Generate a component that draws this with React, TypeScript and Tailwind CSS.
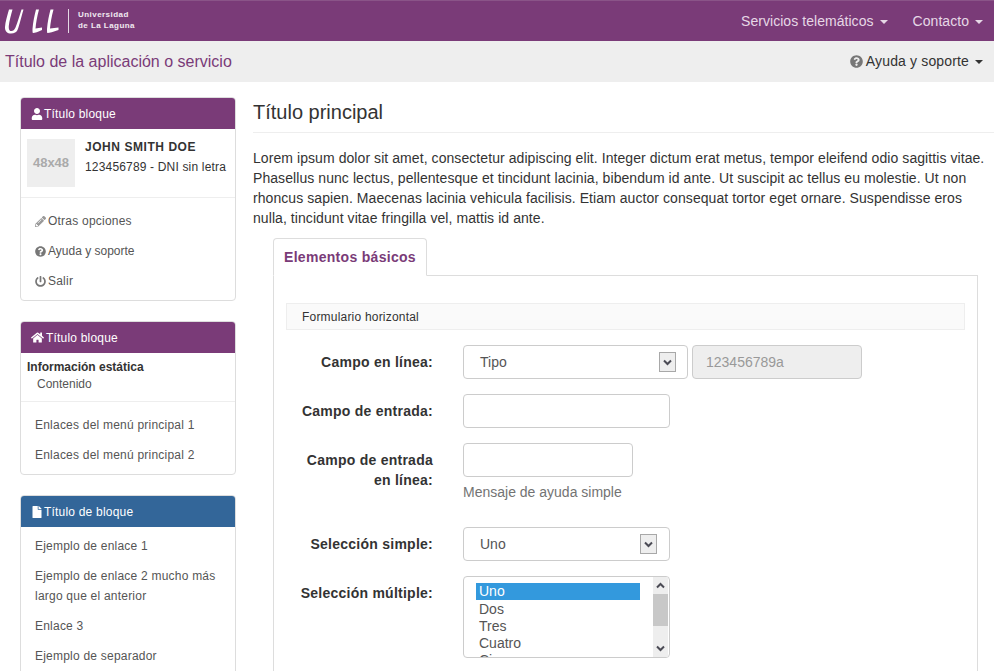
import React from "react";
import { FaUser, FaHome, FaFile, FaPencilAlt, FaQuestionCircle, FaPowerOff } from "react-icons/fa";

function Caret({ className }: { className: string }) {
  return <span className={"inline-block w-0 h-0 border-x-[4px] border-x-transparent border-t-[4px] ml-[6px] align-middle " + className} />;
}

function Chevron({ up }: { up?: boolean }) {
  return (
    <svg width="9" height="7" viewBox="0 0 9 7" className="block">
      <path d={up ? "M1 5.5 4.5 2 8 5.5" : "M1 1.5 4.5 5 8 1.5"} fill="none" stroke="#4b4b55" strokeWidth="2" />
    </svg>
  );
}

function SelectBox({ value, width, pad }: { value: string; width: string; pad: string }) {
  return (
    <div className={"h-[34px] border border-[#ccc] rounded-[4px] bg-white flex items-center justify-between text-[14px] text-[#555] " + width + " " + pad}>
      <span>{value}</span>
      <span className="w-[17px] h-[20px] border border-[#a8a8a8] bg-[#eee] flex items-center justify-center">
        <Chevron />
      </span>
    </div>
  );
}

function Panel({ color, icon, title, children }: { color: string; icon: React.ReactNode; title: string; children: React.ReactNode }) {
  return (
    <section className="border border-[#ddd] rounded-[4px] bg-white mb-[20px] shrink-0">
      <h3 className={"h-[31px] flex items-center pl-[10px] text-white text-[12px] tracking-[0.2px] rounded-t-[3px] " + color}>
        {icon}
        <span>{title}</span>
      </h3>
      {children}
    </section>
  );
}

function MenuLink({ icon, children }: { icon?: React.ReactNode; children: React.ReactNode }) {
  return (
    <a className="flex items-center gap-[2px] px-[14px] py-[5px] leading-[20px] text-[12px] text-[#555] tracking-[0.22px]">
      {icon}
      <span>{children}</span>
    </a>
  );
}

function FormRow({ label, children, className }: { label: React.ReactNode; children: React.ReactNode; className: string }) {
  return (
    <div className={"flex " + className}>
      <label className="w-[147px] shrink-0 text-right font-bold text-[14px] leading-[20px] tracking-[0.25px] text-[#333] pt-[7px]">{label}</label>
      <div className="ml-[30px]">{children}</div>
    </div>
  );
}

export default function App() {
  return (
    <div className="w-[994px] h-[671px] overflow-hidden bg-white text-[#333] font-['Liberation_Sans',Arial,sans-serif]">
      <header className="h-[41px] bg-[#7a3b78] border-t border-[#8a5488] flex items-center justify-between">
        <div className="flex items-center pl-[5px]">
          <svg width="54" height="25" viewBox="0 0 54 25" className="block" fill="#fff">
            <path d="M4 .5C2.500 6 .2 13 0 18c-.2 4 2 6.500 6 6.500 3.500 0 5.500-1.500 6.500-3.500 2-5 4-14 6-20.500h-2c-2 6.500-4 13-6 18-1 2.500-2.500 3.500-4 3.500-2 0-3-1.500-2.700-5C4.300 12 6 6 7.500 .5z" />
            <path d="M31 .5h3c-2 7.500-3 13.500-3.500 19l6.500-1V21c-4 2-7 3-9 3-.5 0-.5-2-.5-4 .5-7 2-14 3.500-19.500z" />
            <path d="M45.500 .5h3c-2 7.500-3 13.500-3.500 19l8.500-1V21c-5.500 2-9 3-11 3-.5 0-.5-2-.5-4 .5-7 2-14 3.500-19.500z" />
          </svg>
          <span className="w-px h-[24px] bg-white/80 ml-[9px]" />
          <span className="ml-[9px] mb-[3px] text-[8px] leading-[11px] font-bold text-white/90 tracking-[0.45px]">
            Universidad<br />de La Laguna
          </span>
        </div>
        <nav className="flex items-center text-[14px] tracking-[0.05px] text-[#e6d8e6] pr-[11px]">
          <a>Servicios telemáticos<Caret className="border-t-[#e6d8e6]" /></a>
          <a className="ml-[25px]">Contacto<Caret className="border-t-[#e6d8e6]" /></a>
        </nav>
      </header>

      <div className="h-[41px] bg-[#eee] flex items-center justify-between pl-[5px] pr-[11px]">
        <span className="text-[16px] text-[#7a3b78]">Título de la aplicación o servicio</span>
        <a className="text-[14px] tracking-[0.15px] flex items-center text-[#333]">
          <FaQuestionCircle className="text-[13px] text-[#777] mr-[3px]" />
          Ayuda y soporte<Caret className="border-t-[#333]" />
        </a>
      </div>

      <main className="flex pt-[15px] pl-[20px]">
        <aside className="w-[216px] shrink-0 flex flex-col">
          <Panel color="bg-[#7a3b78]" icon={<FaUser className="text-[12px] mr-[1px]" />} title="Título bloque">
            <div className="flex px-[6px] pt-[10px] pb-[10px] border-b border-[#eee]">
              <div className="w-[48px] h-[48px] bg-[#eee] flex items-center justify-center text-[13px] font-bold text-[#aaa] shrink-0">48x48</div>
              <div className="ml-[10px] text-[12px]">
                <div className="font-bold text-[12px] leading-[17px] tracking-[0.55px]">JOHN SMITH DOE</div>
                <div className="leading-[20px] mt-[1px] tracking-[0.17px] whitespace-nowrap">123456789 - DNI sin letra</div>
              </div>
            </div>
            <div className="pt-[8px] pb-[4px]">
              <MenuLink icon={<FaPencilAlt className="text-[11px] text-[#999]" />}>Otras opciones</MenuLink>
              <MenuLink icon={<FaQuestionCircle className="text-[11px] text-[#777]" />}><span className="tracking-normal">Ayuda y soporte</span></MenuLink>
              <MenuLink icon={<FaPowerOff className="text-[11px] text-[#777]" />}>Salir</MenuLink>
            </div>
          </Panel>

          <Panel color="bg-[#7a3b78]" icon={<FaHome className="text-[13px] mr-[2px]" />} title="Título bloque">
            <div className="px-[6px] pt-[6px] pb-[8px] border-b border-[#eee] text-[12px] leading-[17px]">
              <div className="font-bold">Información estática</div>
              <div className="pl-[10px] text-[#555]">Contenido</div>
            </div>
            <div className="pt-[8px] pb-[4px]">
              <MenuLink>Enlaces del menú principal 1</MenuLink>
              <MenuLink>Enlaces del menú principal 2</MenuLink>
            </div>
          </Panel>

          <Panel color="bg-[#336699]" icon={<FaFile className="text-[12px] mr-[1px]" />} title="Título de bloque">
            <div className="py-[4px]">
              <MenuLink>Ejemplo de enlace 1</MenuLink>
              <MenuLink>Ejemplo de enlace 2 mucho más largo que el anterior</MenuLink>
              <MenuLink>Enlace 3</MenuLink>
              <MenuLink>Ejemplo de separador</MenuLink>
            </div>
          </Panel>
        </aside>

        <div className="ml-[18px] w-[740px] shrink-0">
          <h1 className="text-[20px] leading-[22px] text-[#333] -ml-px pl-0 pb-[9px] pt-[4px] border-b border-[#eee] font-normal">Título principal</h1>
          <p className="mt-[15px] -ml-px text-[14px] leading-[20px] tracking-[0.07px] pr-[5px]">
            Lorem ipsum dolor sit amet, consectetur adipiscing elit. Integer dictum erat metus, tempor eleifend odio sagittis vitae. Phasellus nunc lectus, pellentesque et tincidunt lacinia, bibendum id ante. Ut suscipit ac tellus eu molestie. Ut non rhoncus sapien. Maecenas lacinia vehicula facilisis. Etiam auctor consequat tortor eget ornare. Suspendisse eros nulla, tincidunt vitae fringilla vel, mattis id ante.
          </p>

          <div className="ml-[19px] mr-[16px] mt-[10px]">
            <div className="h-[38px] flex border-b border-[#ddd]">
              <a className="h-[38px] px-[10px] pt-[1px] border border-[#ddd] border-b-white rounded-t-[4px] bg-white font-bold text-[14px] tracking-[0.3px] text-[#7a3b78] flex items-center">Elementos básicos</a>
            </div>
            <div className="border-l border-r border-[#ddd] px-[12px] pt-[27px] h-[420px]">
              <div className="h-[27px] border border-[#eee] bg-[#fafafa] pl-[15px] flex items-center text-[12px] tracking-[0.2px]">Formulario horizontal</div>

              <FormRow label="Campo en línea:" className="mt-[15px]">
                <div className="flex gap-[4px]">
                  <SelectBox value="Tipo" width="w-[225px]" pad="pl-[16px] pr-[11px]" />
                  <input readOnly value="123456789a" className="w-[170px] h-[34px] border border-[#ccc] rounded-[4px] bg-[#eee] px-[13px] text-[14px] text-[#999] outline-none" />
                </div>
              </FormRow>

              <FormRow label="Campo de entrada:" className="mt-[15px]">
                <input className="block w-[207px] h-[34px] border border-[#ccc] rounded-[4px] bg-white outline-none" />
              </FormRow>

              <FormRow label={<>Campo de entrada<br />en línea:</>} className="mt-[15px]">
                <input className="block w-[170px] h-[34px] border border-[#ccc] rounded-[4px] bg-white outline-none" />
                <div className="mt-[5px] text-[14px] leading-[20px] text-[#737373]">Mensaje de ayuda simple</div>
              </FormRow>

              <FormRow label="Selección simple:" className="mt-[25px]">
                <SelectBox value="Uno" width="w-[207px]" pad="pl-[16px] pr-[12px]" />
              </FormRow>

              <FormRow label="Selección múltiple:" className="mt-[15px]">
                <div className="w-[207px] h-[82px] border border-[#ccc] rounded-[4px] bg-white flex overflow-hidden">
                  <ul className="flex-1 pl-[12px] pt-[6px] pr-[13px] text-[14px] leading-[17px] text-[#555] overflow-hidden">
                    <li className="bg-[#3399dd] text-white pl-[3px]">Uno</li>
                    <li className="pl-[3px] pt-[1px] -mb-[1px]">Dos</li>
                    <li className="pl-[3px] pt-[1px] -mb-[1px]">Tres</li>
                    <li className="pl-[3px] pt-[1px] -mb-[1px]">Cuatro</li>
                    <li className="pl-[3px] pt-[1px]">Cinco</li>
                  </ul>
                  <div className="w-[15px] mr-[1px] bg-[#eee] flex flex-col items-center justify-between py-[5px] relative">
                    <Chevron up />
                    <span className="absolute left-0 right-0 top-[17px] h-[32px] bg-[#c8c8c8]" />
                    <Chevron />
                  </div>
                </div>
              </FormRow>
            </div>
          </div>
        </div>
      </main>
    </div>
  );
}
